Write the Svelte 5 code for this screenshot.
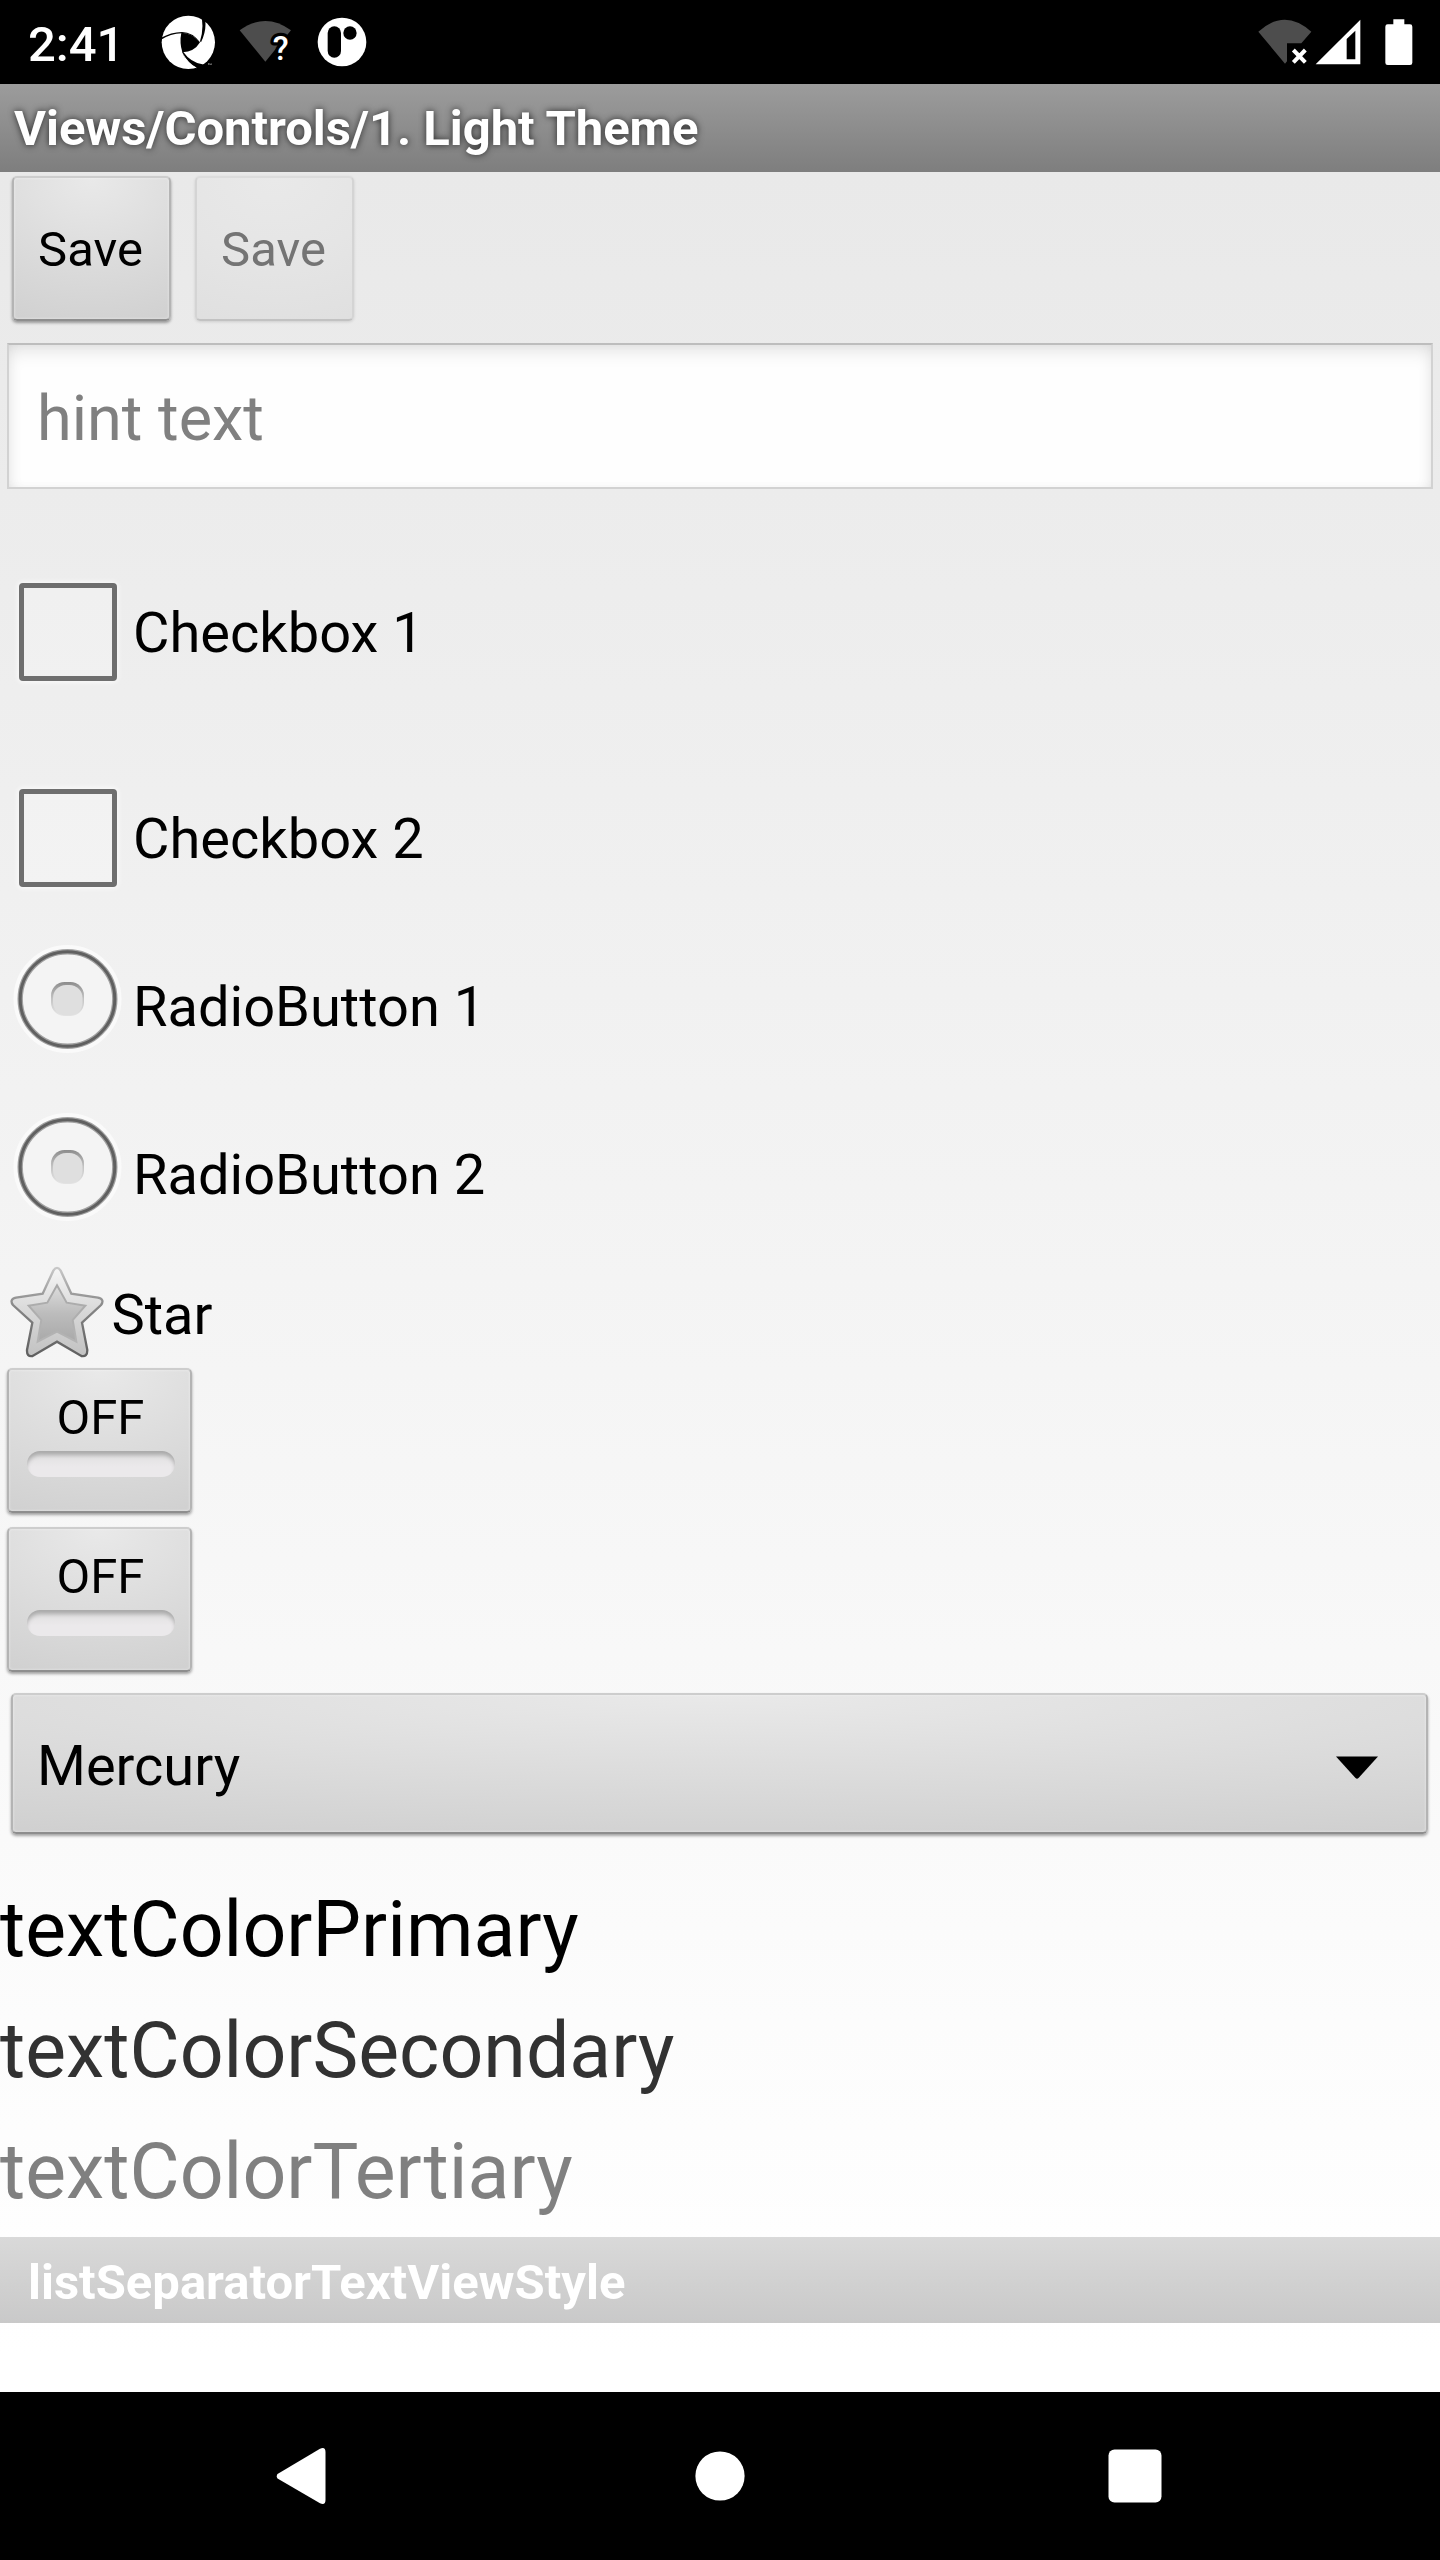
<script>
  const buttons = [
    { label: 'Save', disabled: false },
    { label: 'Save', disabled: true }
  ];
  const checks = ['Checkbox 1', 'Checkbox 2'];
  const radios = ['RadioButton 1', 'RadioButton 2'];
  const toggles = ['OFF', 'OFF'];
</script>

<div class="screen">
  <header class="status">
    <span class="clock">2:41</span>
    <svg class="aperture" viewBox="483 45 165 165">
      <circle cx="565" cy="127" r="80" fill="#fff" />
      <path d="M544 98 Q577 99 600 127 Q583 156 547 157 Q538 127 544 98Z" fill="#000" />
      <path d="M482 114 Q512 97 546 96 Q578 96 602 129 L599 126 Q575 99 545 100 Q512 101 483 119Z" fill="#000" />
      <path d="M603 44 Q613 82 600 124 L603 127 Q619 94 616 64 L613 48Z" fill="#000" />
      <path d="M546 155 Q558 190 596 207 L640 208 L640 186 L623 187 Q617 194 607 193 Q572 187 550 156Z" fill="#000" />
      <path d="M587 201 Q564 188 549 161 Q560 197 590 205Z" fill="#fff" />
      <path d="M624 191h4M626 191v4M630 195v-4l2 2l2-2v4" fill="none" stroke="#ccc" stroke-width="1.5" />
    </svg>
    <svg class="wifi-query" viewBox="717 55 165 135">
      <path d="M719 92 Q796 36 873 92 L796 186Z" fill="#4d4d4d" />
      <text x="818" y="181" font-size="98" stroke="#000" stroke-width="20" stroke-linejoin="round" paint-order="stroke" fill="#fff">?</text>
    </svg>
    <svg class="pill" viewBox="952 52 150 150">
      <circle cx="1027" cy="127" r="73" fill="#fff" />
      <rect x="984" y="80" width="40" height="94" rx="20" fill="#000" />
      <circle cx="1051" cy="100" r="20" fill="#000" />
    </svg>
    <svg class="system" viewBox="110 50 480 150">
      <path d="M114 94 Q193 22 273 94 L243 129 H200 V183 L194 190Z" fill="#4d4d4d" />
      <path d="M219 149 L255 186 M255 149 L219 186" stroke="#fff" stroke-width="12" />
      <path d="M286 192 L420 58 V192Z M379 116 V177 H405 V91Z" fill="#fff" fill-rule="evenodd" />
      <path d="M519 57 H552 V72 H569 Q576 72 576 79 V187 Q576 194 569 194 H502 Q495 194 495 187 V79 Q495 72 502 72 H519Z" fill="#fff" />
    </svg>
  </header>

  <h1 class="title">Views/Controls/1. Light Theme</h1>

  <main class="content">
    <div class="buttons">
      {#each buttons as b}
        <button class="btn" disabled={b.disabled}>{b.label}</button>
      {/each}
    </div>

    <div class="edit">hint text</div>

    <div class="checks">
      {#each checks as label}
        <div class="option">
          <span class="box"></span>
          <span class="option-label">{label}</span>
        </div>
      {/each}
    </div>

    <div class="radios">
      {#each radios as label}
        <div class="option radio">
          <svg class="ring" viewBox="0 0 110 110">
            <defs>
              <linearGradient id="dot" x1="0" y1="0" x2="0" y2="1">
                <stop offset="0" stop-color="#8c8c8c" />
                <stop offset="0.5" stop-color="#c4c4c4" />
                <stop offset="1" stop-color="#e6e6e6" />
              </linearGradient>
            </defs>
            <circle cx="54.5" cy="55" r="50" fill="none" stroke="#fafafa" stroke-width="8" />
            <circle cx="54.5" cy="55" r="47.3" fill="#f4f4f4" stroke="#a2a2a2" stroke-width="5.4" />
            <circle cx="54.5" cy="55" r="47.3" fill="none" stroke="#606060" stroke-width="3" />
            <rect x="38" y="38" width="33" height="34" rx="13.5" fill="url(#dot)" />
            <rect x="40" y="41" width="29.5" height="30.5" rx="13" fill="#dfdfdf" />
          </svg>
          <span class="option-label">{label}</span>
        </div>
      {/each}
    </div>

    <div class="star">
      <svg class="star-icon" viewBox="27 45 288 282">
        <defs>
          <linearGradient id="rim" x1="0" y1="0" x2="0" y2="1">
            <stop offset="0" stop-color="#c8c8c8" />
            <stop offset="0.45" stop-color="#858585" />
            <stop offset="1" stop-color="#5f5f5f" />
          </linearGradient>
          <linearGradient id="body" x1="0" y1="0" x2="0" y2="1">
            <stop offset="0" stop-color="#f6f6f6" />
            <stop offset="0.5" stop-color="#d8d8d8" />
            <stop offset="1" stop-color="#c2c2c2" />
          </linearGradient>
          <linearGradient id="core" x1="0" y1="0" x2="0" y2="1">
            <stop offset="0" stop-color="#dddddd" />
            <stop offset="0.5" stop-color="#bcbcbc" />
            <stop offset="1" stop-color="#a9a9a9" />
          </linearGradient>
          <linearGradient id="coreRim" x1="0" y1="0" x2="0" y2="1">
            <stop offset="0" stop-color="#a8a8a8" />
            <stop offset="1" stop-color="#b4b4b4" />
          </linearGradient>
        </defs>
        <path d="M160 62 Q171 45 182 62 L214 131 L294 143 Q315 148 303 165 L246 218 L262 300 Q262 322 244 318 L171 275 L98 318 Q80 322 81 300 L97 218 L39 165 Q27 148 48 143 L128 131Z" fill="url(#body)" stroke="url(#rim)" stroke-width="7" />
        <path d="M171 106 L200 158 L256 167 L218 210 L229 275 L171 245 L113 275 L124 210 L86 167 L142 158Z" fill="url(#core)" stroke="url(#coreRim)" stroke-width="6" />
      </svg>
      <span class="star-label">Star</span>
    </div>

    <div class="toggles">
      {#each toggles as label}
        <div class="btn toggle">
          <span class="toggle-label">{label}</span>
          <i class="groove"></i>
        </div>
      {/each}
    </div>

    <div class="btn spinner">
      <span>Mercury</span>
      <svg class="arrow" viewBox="0 0 42 23"><path d="M0 0.5H42L22.5 22Q21 23.5 19.5 22Z" /></svg>
    </div>

    <div class="texts">
      <p class="primary">textColorPrimary</p>
      <p class="secondary">textColorSecondary</p>
      <p class="tertiary">textColorTertiary</p>
    </div>

    <h2 class="separator">listSeparatorTextViewStyle</h2>
  </main>

  <nav class="nav">
    <svg viewBox="0 0 50 58"><path d="M1.5 27 Q0 29 1.5 31.5 L44 56.3 Q49.5 58.5 49.5 53 V5 Q49.5 -0.5 44 1.7Z" fill="#fff" /></svg>
    <svg viewBox="0 0 50 50"><circle cx="25" cy="25" r="24.6" fill="#fff" /></svg>
    <svg viewBox="0 0 54 54"><rect x="0.5" y="0.5" width="53" height="53" rx="6" fill="#fff" /></svg>
  </nav>
</div>

<style>
  :global(body) {
    margin: 0;
    background: #000;
  }
  .screen {
    width: 1440px;
    height: 2560px;
    display: flex;
    flex-direction: column;
    overflow: hidden;
    font-family: Roboto, sans-serif;
    color: #000;
    background: #fff;
  }
  svg {
    display: block;
    flex: none;
  }
  .status {
    height: 84px;
    flex: none;
    display: flex;
    align-items: flex-start;
    background: #000;
    color: #fff;
  }
  .clock {
    width: 133px;
    padding-left: 28px;
    line-height: 89px;
    font-size: 49px;
    font-weight: 500;
  }
  .aperture {
    width: 55px;
    height: 55px;
    margin-top: 15px;
  }
  .wifi-query {
    width: 55px;
    height: 45px;
    margin: 18.3px 0 0 23px;
    font-weight: 500;
    overflow: visible;
  }
  .pill {
    width: 50px;
    height: 50px;
    margin: 17.3px 0 0 23.3px;
  }
  .system {
    width: 160px;
    height: 50px;
    margin: 16.7px 23.3px 0 auto;
  }
  .title {
    height: 88px;
    flex: none;
    box-sizing: border-box;
    margin: 0;
    padding-left: 14px;
    line-height: 90px;
    font-size: 49px;
    font-weight: 700;
    letter-spacing: -0.05px;
    color: #fff;
    text-shadow: 0 0 7px rgba(0, 0, 0, 0.73);
    background: linear-gradient(#9c9c9c, #7e7e7e);
  }
  .content {
    height: 2220px;
    flex: none;
    display: flex;
    flex-direction: column;
    background: linear-gradient(#e9e9e9 0, #ededed 420px, #f2f2f2 920px, #f8f8f8 1480px, #fcfcfc 1850px, #fff 2180px);
  }
  .buttons {
    display: flex;
    gap: 24px;
    padding: 4px 0 0 12px;
  }
  .btn {
    box-sizing: border-box;
    width: 159px;
    height: 145px;
    padding: 0 2px 0 0;
    border: 2px solid;
    border-color: #cdcdcd #b4b4b4 #8e8e8e;
    border-radius: 5px;
    font: 49px/143px Roboto, sans-serif;
    text-align: center;
    color: #000;
    background: radial-gradient(ellipse 130% 115% at 50% 0, #e9e9e9 0, #dcdcdc 50%, #cfcfcf 100%);
    box-shadow: 0 2px 3px rgba(0, 0, 0, 0.35), inset 0 0 3px rgba(255, 255, 255, 0.5);
  }
  .btn:disabled {
    color: #747474;
    border-color: #dcdcdc #d4d4d4 #c2c2c2;
    background: radial-gradient(ellipse 130% 115% at 50% 0, #e9e9e9 0, #e5e5e5 50%, #dfdfdf 100%);
    box-shadow: 0 1px 3px rgba(0, 0, 0, 0.12);
  }
  .edit {
    box-sizing: border-box;
    width: 1426px;
    height: 146px;
    margin: 22px 0 0 7px;
    padding-left: 28px;
    border: 2px solid #d2d2d2;
    border-top-color: #bdbdbd;
    line-height: 148px;
    font-size: 63px;
    color: #808080;
    background: #fefefe;
    box-shadow: inset 0 10px 18px -4px rgba(0, 0, 0, 0.11), inset 6px 0 16px -8px rgba(0, 0, 0, 0.08), inset -6px 0 16px -8px rgba(0, 0, 0, 0.08);
  }
  .checks {
    display: flex;
    flex-direction: column;
    gap: 108px;
    margin-top: 94px;
  }
  .option {
    display: flex;
    height: 98px;
  }
  .box {
    box-sizing: border-box;
    width: 98px;
    height: 98px;
    margin: 0 16px 0 19px;
    border: 5px solid #6e6e6e;
    border-radius: 4px;
    background: rgba(255, 255, 255, 0.2);
    box-shadow: 0 0 4px 2px rgba(255, 255, 255, 0.6);
  }
  .option-label {
    line-height: 100px;
    font-size: 56px;
  }
  .radios {
    display: flex;
    flex-direction: column;
    gap: 58px;
    margin-top: 57px;
  }
  .radio {
    height: 110px;
  }
  .ring {
    width: 110px;
    height: 110px;
    margin: 0 10px 0 13px;
  }
  .radio .option-label {
    line-height: 126px;
  }
  .star {
    display: flex;
    height: 94px;
    margin-top: 43px;
  }
  .star-icon {
    width: 96px;
    height: 94px;
    margin: 0 6.5px 0 9px;
  }
  .star-label {
    line-height: 100px;
    font-size: 56px;
  }
  .toggles {
    display: flex;
    flex-direction: column;
    gap: 14px;
    margin: 9px 0 0 7px;
  }
  .toggle {
    width: 185px;
    padding: 0;
    display: flex;
    flex-direction: column;
    align-items: center;
    line-height: 96px;
  }
  .toggle-label {
    padding-left: 2px;
  }
  .groove {
    width: 148px;
    height: 26px;
    margin: -15px 0 0 2px;
    border-radius: 13px;
    background: linear-gradient(#dedede, #ebe9eb 60%);
    box-shadow: inset 0 5px 4px -1px #a9a9a9;
  }
  .spinner {
    display: flex;
    justify-content: space-between;
    align-items: flex-start;
    width: 1417px;
    height: 141px;
    margin: 21px 0 0 11px;
    padding: 0 48px 0 24px;
    font-size: 56px;
    line-height: 142px;
    background: radial-gradient(ellipse 110% 115% at 50% 0, #e9e9e9 0, #dcdcdc 50%, #cfcfcf 100%);
  }
  .arrow {
    width: 42px;
    height: 23px;
    margin-top: 61px;
  }
  .texts {
    padding-top: 36px;
  }
  .texts p {
    margin: 0;
    line-height: 121px;
    font-size: 77px;
    letter-spacing: 0.03px;
  }
  .primary {
    color: #000;
  }
  .secondary {
    color: #323232;
  }
  .tertiary {
    color: #808080;
  }
  .separator {
    height: 86px;
    box-sizing: border-box;
    margin: 4px 0 0;
    padding-left: 28px;
    line-height: 92px;
    font-size: 49px;
    font-weight: 700;
    color: #fff;
    background: linear-gradient(#d9d9d9, #c9c9c9);
  }
  .nav {
    flex: 1;
    display: flex;
    justify-content: space-between;
    align-items: center;
    padding: 0 278px 0 276px;
    background: #000;
  }
  .nav svg:nth-child(1) {
    width: 50px;
    height: 58px;
  }
  .nav svg:nth-child(2) {
    width: 50px;
    height: 50px;
    margin-left: 6px;
  }
  .nav svg:nth-child(3) {
    width: 54px;
    height: 54px;
  }
</style>
